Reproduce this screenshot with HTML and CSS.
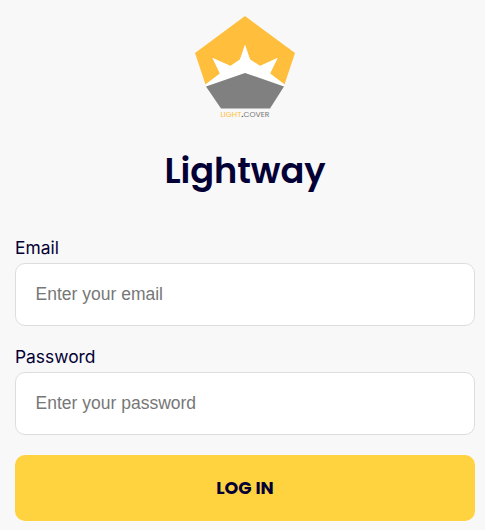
FILE: index.html
```html
<!DOCTYPE html>
<html lang="en">
<head>
<meta charset="utf-8">
<title>Lightway</title>
<link rel="stylesheet" href="styles.css">
</head>
<body>
<main class="login">
  <svg class="logo" viewBox="0 0 120 120" role="img" aria-label="Light.Cover">
    <path fill="#ffbf3c" d="M60 11 110 48 99.500 79.500 85 68.500 92.500 53 75 61 65 54.500 60 40 55 54.500 45.500 61 27.500 53 35 68.500 20.500 79.500 10 48Z"/>
    <path fill="#fff" d="M60 40 65 54.500 75 61 92.500 53 85 68.500 99.500 79.500 98.500 82 60 68 21.500 82 20.500 79.500 35 68.500 27.500 53 45.500 61 55 54.500Z"/>
    <path fill="#808080" d="M60 68 99 81.500 85 103.500H36L21 81.500Z"/>
    <text class="logo-text" x="35.500" y="112.400" textLength="49" lengthAdjust="spacingAndGlyphs"><tspan fill="#ffbf3c">LIGHT</tspan><tspan class="logo-dot">.</tspan><tspan>COVER</tspan></text>
  </svg>
  <h1 class="title">Lightway</h1>
  <form class="form">
    <div class="field">
      <label class="label" for="email">Email</label>
      <input class="input" id="email" type="email" placeholder="Enter your email">
    </div>
    <div class="field">
      <label class="label" for="password">Password</label>
      <input class="input" id="password" type="password" placeholder="Enter your password">
    </div>
    <button class="submit" type="button">LOG IN</button>
  </form>
</main>
</body>
</html>
```
FILE: styles.css
```css
* { box-sizing: border-box; }
body {
  margin: 0;
  background: #f8f8f8;
  color: #030035;
  font-family: Inter, sans-serif;
}
.login {
  display: flex;
  flex-direction: column;
  align-items: center;
  padding: 5px 10px 9px 15px;
}
.logo { display: block; width: 120px; height: 120px; }
.logo-text {
  font: 400 7.6px Poppins, sans-serif;
  fill: #777;
}
.logo-dot { font-weight: 700; fill: #444; }
.title {
  margin: 18px 0 0;
  height: 56px;
  font: 600 35.2px/56px Poppins, Inter, sans-serif;
  letter-spacing: -0.05px;
}
.form { width: 100%; margin-top: 37px; }
.field { height: 90px; margin-bottom: 19px; }
.label {
  display: block;
  height: 27px;
  font-size: 17.4px;
  line-height: 24px;
}
.input {
  display: block;
  width: 100%;
  height: 63px;
  padding: 0 19.6px;
  border: 1px solid #ddd;
  border-radius: 10px;
  background: #fff;
  font: 17.500px "Liberation Sans", Arial, sans-serif;
}
.input::placeholder { color: #777; }
.submit {
  display: block;
  width: 100%;
  height: 66px;
  margin-top: 20px;
  padding: 0;
  border: 0;
  border-radius: 10px;
  background: #ffd23f;
  color: #030035;
  font: 700 17.5px Poppins, Inter, sans-serif;
}
```
